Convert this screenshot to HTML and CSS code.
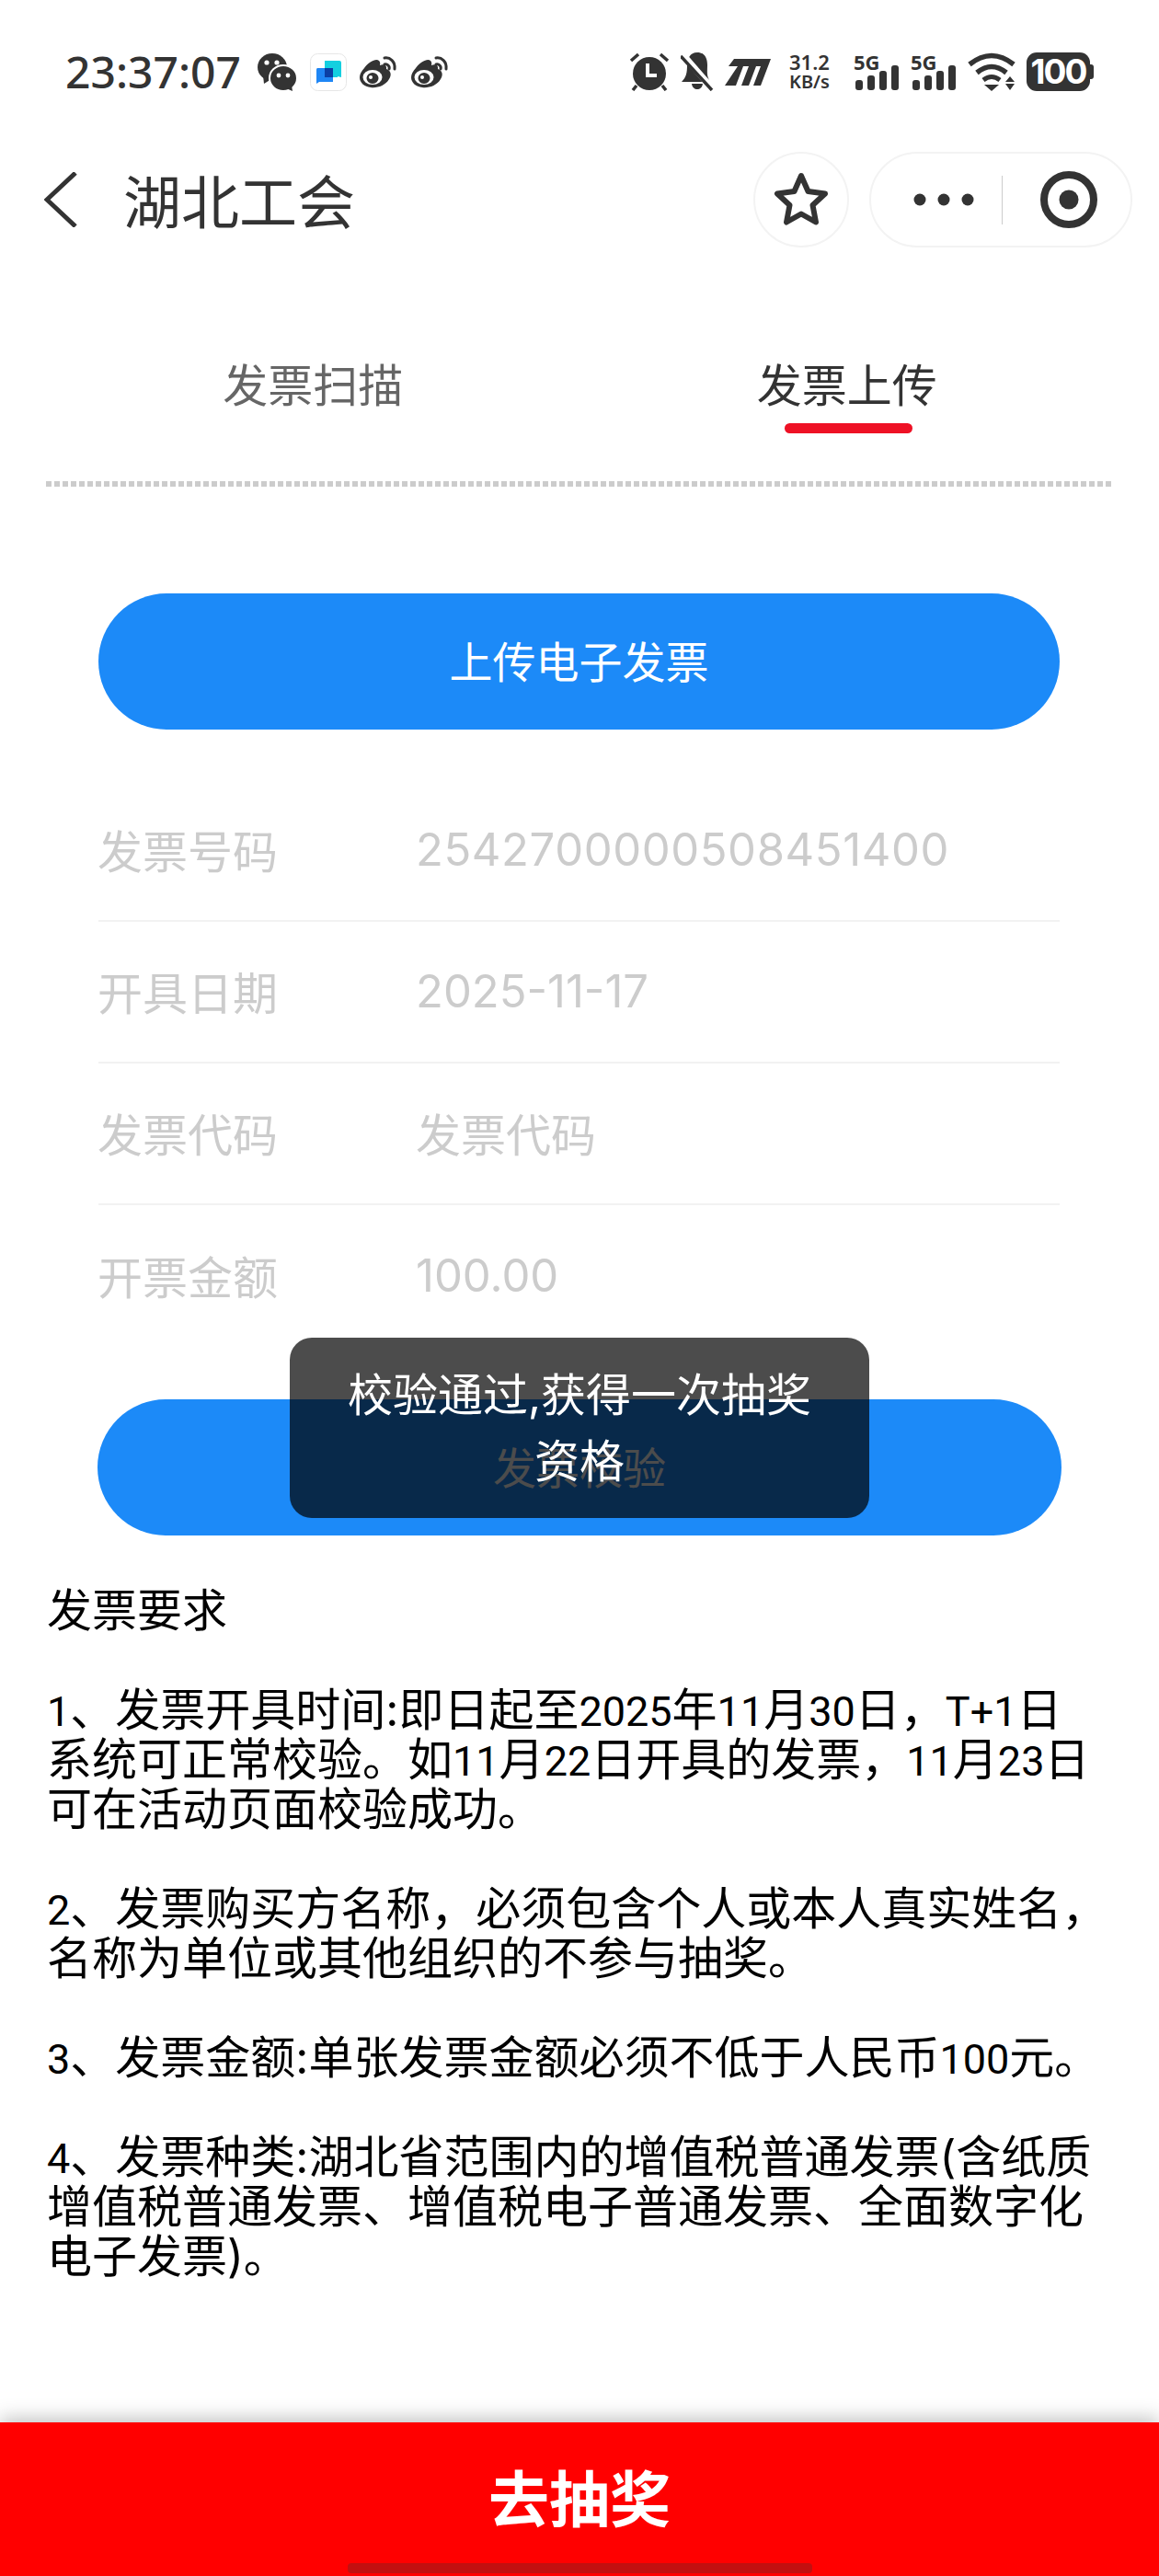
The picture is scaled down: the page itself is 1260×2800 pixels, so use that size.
FILE: index.html
```html
<!DOCTYPE html>
<html lang="zh-CN">
<head>
    <meta charset="UTF-8" />
    <meta name="viewport" content="width=device-width, initial-scale=1.0" />
    <title>湖北工会</title>
    <link rel="stylesheet" href="styles.css">
</head>
<body>
    <div class="status-bar">
        <div class="status-left">
            <span class="time">23:37:07</span>
            <svg class="icon-wechat" width="42" height="41" viewBox="0 0 42 41">
                <ellipse cx="16" cy="15" rx="16" ry="15" fill="#333" />
                <path d="M6 24 L7 33 L15 28Z" fill="#333" />
                <circle cx="10" cy="10" r="2.6" fill="#fff" />
                <circle cx="21" cy="10" r="2.6" fill="#fff" />
                <ellipse cx="28" cy="27" rx="15" ry="14" fill="#333" stroke="#fff" stroke-width="2" />
                <path d="M31 38 L38 41 L37 35Z" fill="#333" />
                <circle cx="23" cy="24" r="2.4" fill="#fff" />
                <circle cx="33" cy="24" r="2.4" fill="#fff" />
            </svg>
            <svg class="icon-app" width="40" height="41" viewBox="0 0 40 41">
                <rect x="0.5" y="0.5" width="39" height="40" rx="8" fill="#fff" stroke="#e6e6e6" />
                <path d="M16 8 H32 a2 2 0 0 1 2 2 V26 L30 25 V26 H16Z" fill="#14cfe0" />
                <path d="M8 16 H23 a2 2 0 0 1 2 2 V31 H10 L7 33 V18 a2 2 0 0 1 1 -2Z" fill="#1f86f5" />
                <rect x="16" y="16" width="9" height="10" fill="#0b3fa5" />
            </svg>
            <svg class="icon-weibo" width="42" height="36" viewBox="0 0 42 36">
                <path d="M5 14 C10 7 18 3 21 6 C23 8 22 10 22 11 C26 9 30 11 29 15 C34 17 35 21 32 26 C28 33 19 36 12 35 C5 34 0 30 0 24 C0 21 2 17 5 14Z" fill="#333" />
                <ellipse cx="14" cy="24" rx="10.5" ry="8" fill="#fff" />
                <ellipse cx="14" cy="25" rx="6.5" ry="6" fill="#333" />
                <circle cx="12" cy="24" r="2" fill="#fff" />
                <path d="M27 3 C33 2 39 7 38 15" fill="none" stroke="#333" stroke-width="3" stroke-linecap="round" />
                <path d="M27 10 C30 9 33 12 32 15" fill="none" stroke="#333" stroke-width="3" stroke-linecap="round" />
            </svg>
            <svg class="icon-weibo" width="42" height="36" viewBox="0 0 42 36">
                <path d="M5 14 C10 7 18 3 21 6 C23 8 22 10 22 11 C26 9 30 11 29 15 C34 17 35 21 32 26 C28 33 19 36 12 35 C5 34 0 30 0 24 C0 21 2 17 5 14Z" fill="#333" />
                <ellipse cx="14" cy="24" rx="10.5" ry="8" fill="#fff" />
                <ellipse cx="14" cy="25" rx="6.5" ry="6" fill="#333" />
                <circle cx="12" cy="24" r="2" fill="#fff" />
                <path d="M27 3 C33 2 39 7 38 15" fill="none" stroke="#333" stroke-width="3" stroke-linecap="round" />
                <path d="M27 10 C30 9 33 12 32 15" fill="none" stroke="#333" stroke-width="3" stroke-linecap="round" />
            </svg>
        </div>
        <div class="status-right">
            <svg width="44" height="42" viewBox="0 0 44 42">
                <circle cx="22" cy="23" r="18" fill="#333" />
                <path d="M20 12 V25 H30" fill="none" stroke="#fff" stroke-width="4" />
                <path d="M2 9 L10 2 M34 2 L42 9 M8 36 L4 41 M36 36 L40 41" stroke="#333" stroke-width="3.5" />
            </svg>
            <svg width="36" height="42" viewBox="0 0 36 42">
                <path d="M18 0 C10 0 7 7 7 14 C7 22 6 27 1 32 H28 L5 9 L31 30 C28 25 29 20 29 14 C29 6 26 0 18 0Z" fill="#333" />
                <path d="M12 34 H24 C23 42 13 42 12 34Z" fill="#333" />
                <path d="M2 2 L35 40" stroke="#fff" stroke-width="7" />
                <path d="M0 4 L34 41" stroke="#333" stroke-width="3.5" />
            </svg>
            <svg width="50" height="29" viewBox="0 0 50 29">
                <path d="M10 0 H50 L39 29 H31 L39 8 H34 L26 29 H18 L26 8 H20 L12 29 H0 L14 8 H4Z" fill="#333" />
            </svg>
            <div class="speed speed-gap">
                <span>31.2</span>
                <span class="speed-unit">KB/s</span>
            </div>
            <div class="signal speed-gap">
                <span class="signal-text">5G</span>
                <svg width="50" height="42" viewBox="0 0 50 42">
                    <rect x="2" y="30" width="8" height="11" rx="3" fill="#333" />
                    <rect x="15" y="25" width="8" height="16" rx="3" fill="#333" />
                    <rect x="28" y="20" width="8" height="21" rx="3" fill="#333" />
                    <rect x="41" y="14" width="8" height="27" rx="3" fill="#333" />
                </svg>
            </div>
            <div class="signal">
                <span class="signal-text">5G</span>
                <svg width="50" height="42" viewBox="0 0 50 42">
                    <rect x="2" y="30" width="8" height="11" rx="3" fill="#333" />
                    <rect x="15" y="25" width="8" height="16" rx="3" fill="#333" />
                    <rect x="28" y="20" width="8" height="21" rx="3" fill="#333" />
                    <rect x="41" y="14" width="8" height="27" rx="3" fill="#333" />
                </svg>
            </div>
            <svg width="52" height="42" viewBox="0 0 52 42">
                <path d="M2 13 Q26 -6 50 13" fill="none" stroke="#333" stroke-width="5.5" />
                <path d="M10 22 Q26 9 42 22" fill="none" stroke="#333" stroke-width="5.5" />
                <path d="M17 30 Q26 23 35 30" fill="none" stroke="#333" stroke-width="5" />
                <path d="M18 35 H34 L26 42Z" fill="#333" />
                <path d="M41 32 L46 26 L51 32Z M41 34 H51 L46 41Z" fill="#333" />
            </svg>
            <div class="battery">100</div>
        </div>
    </div>

    <div class="nav">
        <svg class="back" width="36" height="60" viewBox="0 0 36 60">
            <path d="M34 1 L3 30 L34 59" fill="none" stroke="#333" stroke-width="5" />
        </svg>
        <h1 class="nav-title">湖北工会</h1>
        <div class="nav-actions">
            <div class="star-btn">
                <svg width="60" height="60" viewBox="0 0 60 60">
                    <path d="M30 4 L37.5 21 L56 23.5 L42.5 36 L46 54.5 L30 45.5 L14 54.5 L17.5 36 L4 23.5 L22.5 21Z" fill="none" stroke="#333" stroke-width="6" stroke-linejoin="round" />
                </svg>
            </div>
            <div class="capsule">
                <svg width="66" height="16" viewBox="0 0 66 16">
                    <circle cx="7" cy="8" r="6.5" fill="#333" />
                    <circle cx="33" cy="8" r="6.5" fill="#333" />
                    <circle cx="59" cy="8" r="6.5" fill="#333" />
                </svg>
                <span class="capsule-line"></span>
                <svg width="62" height="62" viewBox="0 0 62 62">
                    <circle cx="31" cy="31" r="27" fill="none" stroke="#333" stroke-width="8" />
                    <circle cx="31" cy="31" r="10.5" fill="#333" />
                </svg>
            </div>
        </div>
    </div>

    <div class="tabs">
        <div class="tab">发票扫描</div>
        <div class="tab tab-active">发票上传</div>
    </div>

    <div class="main">
        <button class="blue-btn">上传电子发票</button>
        <div class="form">
            <div class="row">
                <span class="row-label">发票号码</span>
                <span class="row-value row-value-long">2542700000508451400</span>
            </div>
            <div class="row">
                <span class="row-label">开具日期</span>
                <span class="row-value">2025-11-17</span>
            </div>
            <div class="row">
                <span class="row-label">发票代码</span>
                <span class="row-placeholder">发票代码</span>
            </div>
            <div class="row">
                <span class="row-label">开票金额</span>
                <span class="row-value">100.00</span>
            </div>
        </div>
        <button class="blue-btn check-btn">发票校验</button>
    </div>

    <div class="rules">
        发票要求<br><br>
        <span class="num">1</span>、发票开具时间:即日起至<span class="num">2025</span>年<span class="num">11</span>月<span class="num">30</span>日，<span class="num">T+1</span>日<br>
        系统可正常校验。如<span class="num">11</span>月<span class="num">22</span>日开具的发票，<span class="num">11</span>月<span class="num">23</span>日<br>
        可在活动页面校验成功。<br><br>
        <span class="num">2</span>、发票购买方名称，必须包含个人或本人真实姓名，<br>
        名称为单位或其他组织的不参与抽奖。<br><br>
        <span class="num">3</span>、发票金额:单张发票金额必须不低于人民币<span class="num">100</span>元。<br><br>
        <span class="num">4</span>、发票种类:湖北省范围内的增值税普通发票(含纸质<br>
        增值税普通发票、增值税电子普通发票、全面数字化<br>
        电子发票)。
    </div>

    <div class="bottom-bar">
        去抽奖
        <span class="home-bar"></span>
    </div>

    <div class="toast">校验通过,获得一次抽奖资格</div>
</body>
</html>
```

FILE: styles.css
```css
body {
    margin: 0;
    min-height: 2800px;
    display: flex;
    flex-direction: column;
    position: relative;
    background: #fff;
    font-family: Inter, "Noto Sans CJK SC", sans-serif;
    color: #333;
}

.status-bar {
    display: flex;
    justify-content: space-between;
    align-items: center;
    height: 42px;
    padding: 57px 70px 66px 71px;
}

.status-left, .status-right {
    display: flex;
    align-items: center;
}

.status-right {
    gap: 12px;
}

.time {
    font-family: "Noto Sans", sans-serif;
    font-size: 48px;
    font-weight: 500;
    line-height: 42px;
    margin-right: 18px;
}

.icon-app {
    margin-left: 15px;
}

.icon-weibo {
    margin-left: 14px;
}

.speed-gap {
    margin-left: 8px;
}

.speed {
    display: flex;
    flex-direction: column;
    width: 50px;
    font-family: "Noto Sans", sans-serif;
    font-size: 22px;
    font-weight: 600;
    line-height: 21px;
    white-space: nowrap;
}

.speed-unit {
    font-size: 20px;
}

.signal {
    position: relative;
    width: 50px;
    height: 42px;
}

.signal-text {
    position: absolute;
    left: 0;
    top: 0;
    font-family: "Noto Sans", sans-serif;
    font-size: 22px;
    font-weight: 700;
    line-height: 20px;
}

.battery {
    position: relative;
    width: 69px;
    height: 42px;
    margin-right: 5px;
    text-align: center;
    background: #333;
    border-radius: 11px;
    color: #fff;
    font-size: 37px;
    font-weight: 700;
    line-height: 42px;
    letter-spacing: -2px;
}

.battery::after {
    content: "";
    position: absolute;
    left: 69px;
    top: 13px;
    width: 4px;
    height: 16px;
    border-radius: 0 3px 3px 0;
    background: #333;
}

.nav {
    display: flex;
    align-items: center;
    height: 104px;
    padding: 0 29px 0 48px;
}

.nav-title {
    margin: 0 0 4px 50px;
    font-size: 63px;
    font-weight: 400;
}

.nav-actions {
    display: flex;
    gap: 22px;
    margin-left: auto;
}

.star-btn {
    display: flex;
    justify-content: center;
    align-items: center;
    width: 104px;
    height: 104px;
    box-sizing: border-box;
    border: 2px solid #f3f3f3;
    border-radius: 50%;
}

.capsule {
    display: flex;
    align-items: center;
    width: 286px;
    height: 104px;
    box-sizing: border-box;
    padding-left: 46px;
    border: 2px solid #f3f3f3;
    border-radius: 52px;
}

.capsule-line {
    width: 1px;
    height: 53px;
    margin: 0 41px 0 30px;
    background: #ccc;
}

.tabs {
    display: flex;
    height: 260px;
    box-sizing: border-box;
    margin: 0 49px 0 50px;
    padding-top: 116px;
    background: repeating-linear-gradient(to right, #ccc 0, #ccc 6px, #fff 6px, #fff 9px) left bottom / 100% 6px no-repeat;
}

.tab {
    position: relative;
    flex: 1;
    height: 70px;
    text-align: center;
    font-size: 49px;
    line-height: 70px;
    color: #666;
}

.tab-active {
    color: #333;
}

.tab-active::after {
    content: "";
    position: absolute;
    left: 222px;
    top: 75px;
    width: 139px;
    height: 11px;
    border-radius: 6px;
    background: #ee1125;
}

.main {
    padding: 116px 108px 0 107px;
}

.blue-btn {
    display: block;
    width: 100%;
    height: 148px;
    padding: 0 0 6px;
    border: none;
    border-radius: 74px;
    background: #1c8af8;
    color: #fff;
    font-family: inherit;
    font-size: 47px;
}

.form {
    margin-top: 55px;
}

.row {
    display: flex;
    align-items: center;
    height: 154px;
    box-sizing: border-box;
    padding-bottom: 3px;
    border-bottom: 2px solid #f2f2f2;
    font-size: 49px;
    color: #ccc;
}

.row:last-child {
    border-bottom: none;
}

.row-label {
    width: 346px;
    margin-left: -1px;
}

.row-value {
    margin-top: 2px;
}

.row-value-long {
    letter-spacing: 0.6px;
}

.check-btn {
    margin-top: 57px;
    width: 1048px;
    margin-left: -1px;
}

.rules {
    margin-top: 55px;
    padding: 0 51px;
    font-size: 49px;
    line-height: 54px;
    color: #000;
    white-space: nowrap;
}

.num {
    font-family: Roboto, sans-serif;
    font-size: 45px;
    line-height: 0;
}

.bottom-bar {
    position: relative;
    margin-top: auto;
    height: 167px;
    text-align: center;
    background: #f00;
    box-shadow: 0 -4px 20px rgba(0, 0, 0, .25);
    color: #fff;
    font-size: 66px;
    font-weight: 700;
    line-height: 168px;
}

.home-bar {
    position: absolute;
    left: 378px;
    bottom: 3px;
    width: 505px;
    height: 11px;
    border-radius: 4px;
    background: #c21010;
}

.toast {
    position: absolute;
    top: 1454px;
    left: 315px;
    width: 630px;
    box-sizing: border-box;
    padding: 27px 56px 25px;
    border-radius: 24px;
    background: rgba(0, 0, 0, .7);
    color: #fff;
    font-size: 49px;
    line-height: 72px;
    text-align: center;
}
```
